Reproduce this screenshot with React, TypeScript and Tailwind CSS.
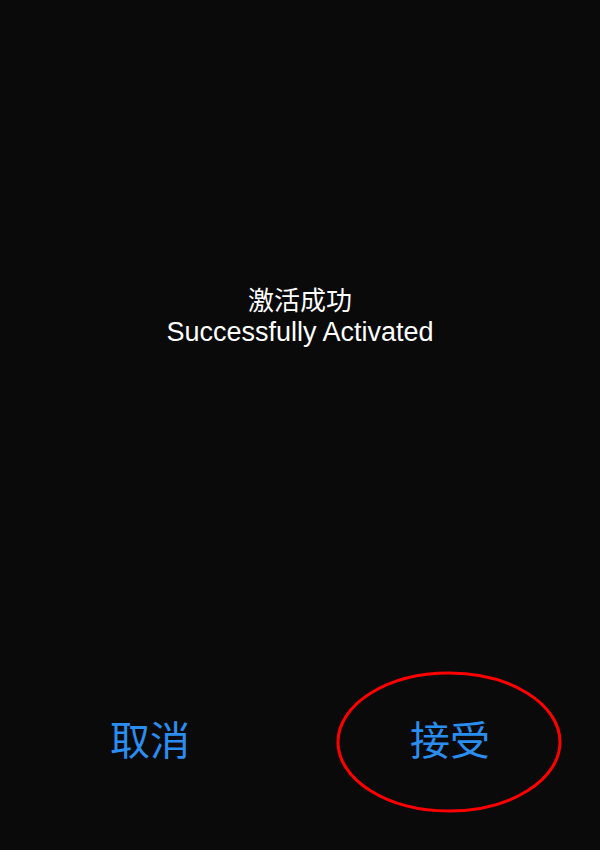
const App = () => {
  return (
    <div
      className="relative flex flex-col w-[600px] h-[850px] bg-[#0a0a0a] text-white"
      style={{ fontFamily: '"Liberation Sans", "Noto Sans CJK SC", sans-serif' }}
    >
      <div className="flex flex-col items-center pt-[286px] leading-[31px]">
        <span className="text-[26px]">激活成功</span>
        <span className="text-[27px]">Successfully Activated</span>
      </div>

      <div className="mt-auto grid grid-cols-2 pb-[83px] text-[40px] leading-[52px] text-[#2a8ef0]">
        <button className="flex justify-center">取消</button>
        <button className="flex justify-center">接受</button>
      </div>

      <svg className="absolute left-[335px] top-[670px]" width="228" height="144" viewBox="0 0 228 144">
        <ellipse cx="114" cy="72" rx="111" ry="69" fill="none" stroke="#ff0000" strokeWidth="3" />
      </svg>
    </div>
  );
};

export default App;
